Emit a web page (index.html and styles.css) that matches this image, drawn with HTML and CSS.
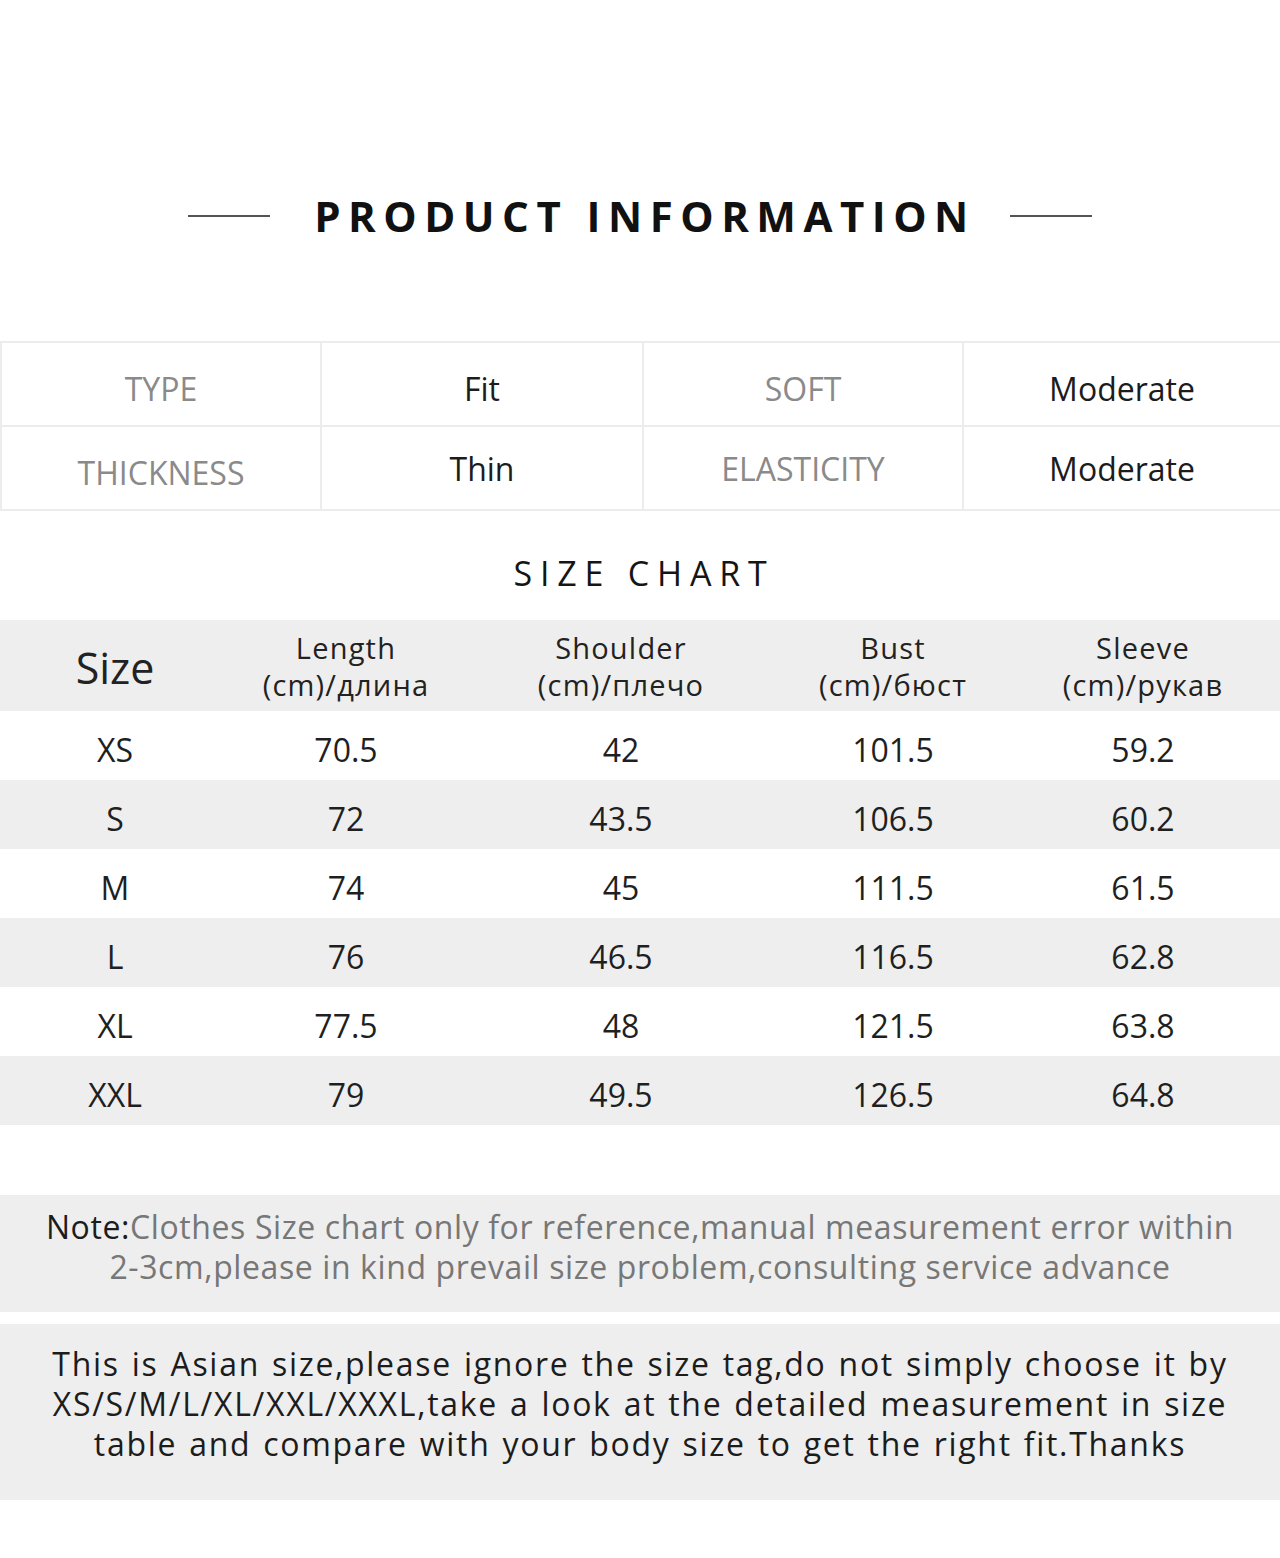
FILE: index.html
```html
<!DOCTYPE html>
<html lang="en">
<head>
<meta charset="utf-8">
<title>Product Information</title>
<link rel="stylesheet" href="styles.css">
</head>
<body>
<div class="page">
  <header class="title-wrap">
    <span class="title-line"></span>
    <h1 class="title">PRODUCT INFORMATION</h1>
    <span class="title-line"></span>
  </header>

  <div class="attrs">
    <div class="attr-cell label top">TYPE</div>
    <div class="attr-cell value top">Fit</div>
    <div class="attr-cell label top">SOFT</div>
    <div class="attr-cell value top">Moderate</div>
    <div class="attr-cell label low">THICKNESS</div>
    <div class="attr-cell value">Thin</div>
    <div class="attr-cell label">ELASTICITY</div>
    <div class="attr-cell value">Moderate</div>
  </div>

  <h2 class="subtitle">SIZE CHART</h2>

  <div class="chart">
    <div class="row head">
      <div class="cell size-head">Size</div>
      <div class="cell"><span class="hl">Length</span><span class="hl">(cm)/длина</span></div>
      <div class="cell"><span class="hl">Shoulder</span><span class="hl">(cm)/плечо</span></div>
      <div class="cell"><span class="hl">Bust</span><span class="hl">(cm)/бюст</span></div>
      <div class="cell"><span class="hl">Sleeve</span><span class="hl">(cm)/рукав</span></div>
    </div>
    <div class="row">
      <div class="cell">XS</div><div class="cell">70.5</div><div class="cell">42</div><div class="cell">101.5</div><div class="cell">59.2</div>
    </div>
    <div class="row alt">
      <div class="cell">S</div><div class="cell">72</div><div class="cell">43.5</div><div class="cell">106.5</div><div class="cell">60.2</div>
    </div>
    <div class="row">
      <div class="cell">M</div><div class="cell">74</div><div class="cell">45</div><div class="cell">111.5</div><div class="cell">61.5</div>
    </div>
    <div class="row alt">
      <div class="cell">L</div><div class="cell">76</div><div class="cell">46.5</div><div class="cell">116.5</div><div class="cell">62.8</div>
    </div>
    <div class="row">
      <div class="cell">XL</div><div class="cell">77.5</div><div class="cell">48</div><div class="cell">121.5</div><div class="cell">63.8</div>
    </div>
    <div class="row alt">
      <div class="cell">XXL</div><div class="cell">79</div><div class="cell">49.5</div><div class="cell">126.5</div><div class="cell">64.8</div>
    </div>
  </div>

  <div class="note">
    <p><strong class="note-key">Note:</strong>Clothes Size chart only for reference,manual measurement error within<br>2-3cm,please in kind prevail size problem,consulting service advance</p>
  </div>

  <div class="asian">
    <div class="asian-text">
      <span class="al">This is Asian size,please ignore the size tag,do not simply choose it by</span>
      <span class="al">XS/S/M/L/XL/XXL/XXXL,take a look at the detailed measurement in size</span>
      <span class="al">table and compare with your body size to get the right fit.Thanks</span>
    </div>
  </div>
</div>
</body>
</html>
```

FILE: styles.css
```css
* { box-sizing: border-box; }
html, body { margin: 0; padding: 0; background: #fff; }
body {
  font-family: "Open Sans", "Noto Sans", sans-serif;
  color: #222;
}
.page {
  width: 1280px;
  height: 1558px;
  padding-top: 188px;
}
.title-wrap {
  display: flex;
  justify-content: center;
  align-items: center;
  gap: 34px;
  height: 56px;
}
.title-line {
  display: block;
  width: 82px;
  height: 2px;
  background: #555;
}
.title {
  margin: 0;
  font-size: 42px;
  font-weight: 700;
  letter-spacing: 7.5px;
  color: #111;
  line-height: 56px;
  padding-left: 10px;
}
.attrs {
  margin-top: 97px;
  display: grid;
  grid-template-columns: 320px 322px 320px 318px;
  grid-template-rows: 84px 84px;
  border-top: 2px solid #ececec;
  border-left: 2px solid #ececec;
}
.attr-cell {
  display: flex;
  align-items: center;
  justify-content: center;
  border-right: 2px solid #ececec;
  border-bottom: 2px solid #ececec;
  font-size: 32px;
}
.attr-cell.label { color: #8a8a8a; }
.attr-cell.value { color: #1c1c1c; }
.attr-cell.top { padding-top: 8px; }
.attr-cell.low { padding-top: 8px; }
.subtitle {
  margin: 0;
  height: 109px;
  padding-top: 40px;
  text-align: center;
  font-size: 34px;
  font-weight: 400;
  letter-spacing: 7.8px;
  line-height: 44px;
  color: #151515;
  padding-left: 8px;
}
.chart { width: 1280px; }
.row {
  display: grid;
  grid-template-columns: 230px 232px 318px 226px 274px;
  height: 69px;
  align-items: center;
  font-size: 32px;
  color: #1f1f1f;
  padding-top: 8px;
}
.row.alt { background: #eeeeee; }
.row.head {
  height: 91px;
  background: #eeeeee;
  color: #222;
  padding-top: 0;
}
.cell { text-align: center; }
.hl {
  display: block;
  font-size: 29px;
  line-height: 37px;
  height: 37px;
  letter-spacing: 1.2px;
}
.size-head { font-size: 43px; padding-top: 4px; }
.note {
  margin-top: 70px;
  height: 117px;
  background: #eeeeee;
  display: flex;
  align-items: center;
  justify-content: center;
  padding-bottom: 14px;
}
.note p {
  margin: 0;
  text-align: center;
  font-size: 32px;
  line-height: 40px;
  letter-spacing: 0.6px;
  color: #777;
}
.note-key { font-weight: 400; color: #1c1c1c; }
.asian {
  margin-top: 12px;
  height: 176px;
  background: #eeeeee;
  display: flex;
  align-items: center;
  justify-content: center;
  padding-bottom: 16px;
}
.asian-text { text-align: center; }
.al {
  display: block;
  font-size: 32px;
  line-height: 40px;
  height: 40px;
  letter-spacing: 1.7px;
  word-spacing: 2px;
  color: #1c1c1c;
}
```
